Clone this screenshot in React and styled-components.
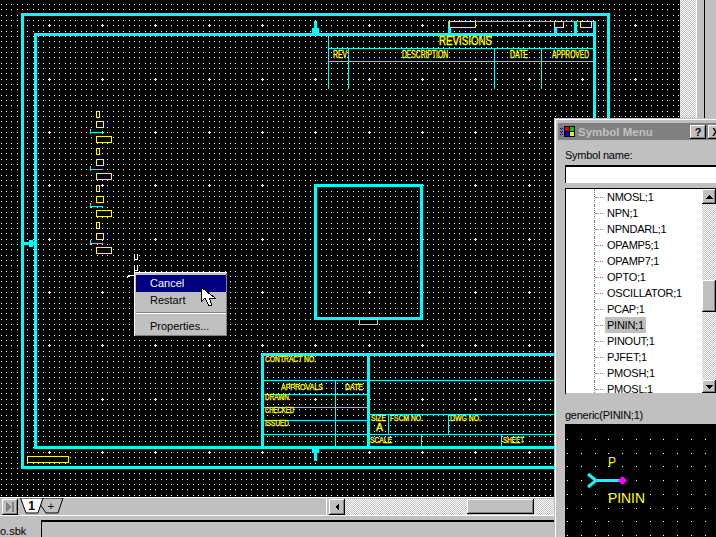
import React from 'react';
import styled, { createGlobalStyle } from 'styled-components';

const GlobalStyle = createGlobalStyle`
  html, body {
    margin: 0;
    padding: 0;
    background: #c0c0c0;
  }
`;

const UI_FONT = `"Liberation Sans", Arial, sans-serif`;
const CHECKER = `repeating-conic-gradient(#c0c0c0 0 25%, #ffffff 0 50%) 0 0 / 2px 2px`;
const RAISED = `box-shadow: inset -1px -1px 0 #000, inset 1px 1px 0 #fff, inset -2px -2px 0 #808080;`;

const Screen = styled.div`
  position: relative;
  display: flex;
  flex-direction: column;
  width: 716px;
  height: 537px;
  overflow: hidden;
  background: #c0c0c0;
  font-family: ${UI_FONT};
  color: #000;
`;

const MainRow = styled.div`
  display: flex;
  height: 497px;
`;

const CanvasSvg = styled.svg`
  display: block;
  flex: none;
  background: #000;
  text { font-family: ${UI_FONT}; }
`;

const VTrack = styled.div`
  width: 16px;
  background: ${CHECKER};
`;

const VGap = styled.div`
  width: 8px;
  background: #c0c0c0;
  border-left: 1px solid #fff;
  box-sizing: border-box;
`;

const VEdge = styled.div`
  flex: 1;
  background: #c0c0c0;
  border-left: 1px solid #000;
`;

const TabRow = styled.div`
  display: flex;
  align-items: center;
  box-sizing: border-box;
  height: 19px;
  padding-left: 2px;
  border-top: 1px solid #fff;
  border-bottom: 1px solid #fff;
`;

const NavButton = styled.div`
  display: flex;
  align-items: center;
  justify-content: center;
  width: 16px;
  height: 16px;
  background: #c0c0c0;
  ${RAISED}
`;

const TabStrip = styled.svg`
  display: block;
  margin-left: 2px;
  flex: none;
  text { font-family: ${UI_FONT}; }
`;

const TabFiller = styled.div`
  width: 262px;
  height: 100%;
  border-right: 1px solid #fff;
  margin-right: 2px;
`;

const ArrowButton = styled.div`
  display: flex;
  align-items: center;
  justify-content: center;
  flex: none;
  width: ${p => p.$w || 16}px;
  height: ${p => p.$h || 16}px;
  background: #c0c0c0;
  ${RAISED}
`;

const HTrack = styled.div`
  width: ${p => p.$w}px;
  height: 16px;
  flex: none;
  background: ${CHECKER};
`;

const Thumb = styled.div`
  flex: none;
  width: ${p => (p.$w ? `${p.$w}px` : 'auto')};
  height: ${p => p.$h}px;
  background: #c0c0c0;
  ${RAISED}
`;

const StatusBar = styled.div`
  display: flex;
  flex: 1;
  padding-top: 4px;
`;

const StatusName = styled.div`
  width: 41px;
  flex: none;
  font-size: 11px;
  line-height: 13px;
  padding-top: 5px;
  overflow: hidden;
`;

const StatusField = styled.div`
  flex: 1;
  border-top: 2px solid #000;
  border-left: 1px solid #000;
`;

const ContextMenu = styled.div`
  position: absolute;
  left: 134px;
  top: 272px;
  box-sizing: border-box;
  width: 94px;
  height: 65px;
  padding: 3px 2px;
  background: #c0c0c0;
  ${RAISED}
  font-size: 11px;
`;

const MenuItem = styled.div`
  height: 17px;
  line-height: 17px;
  padding-left: 14px;
  color: ${p => (p.$active ? '#fff' : '#000')};
  background: ${p => (p.$active ? '#000080' : 'transparent')};
`;

const MenuSeparator = styled.div`
  height: 0;
  margin: 3px 0 4px;
  border-top: 1px solid #808080;
  border-bottom: 1px solid #fff;
`;

const Pointer = styled.svg`
  position: absolute;
  left: 200px;
  top: 286px;
`;

const SymbolWindow = styled.div`
  position: absolute;
  left: 554px;
  top: 118px;
  width: 200px;
  height: 440px;
  background: #c0c0c0;
  border-left: 1px solid #c0c0c0;
  border-top: 1px solid #c0c0c0;
  box-shadow: inset 1px 1px 0 #fff;
`;

const TitleBar = styled.div`
  display: flex;
  align-items: center;
  height: 17px;
  margin: 4px 0 0 3px;
  background: #808080;
  padding-left: 2px;
`;

const TitleText = styled.div`
  margin-left: 2px;
  width: 112px;
  font-size: 11.5px;
  font-weight: bold;
  color: #c0c0c0;
`;

const TitleButton = styled.div`
  flex: none;
  width: 16px;
  height: 14px;
  margin-right: 2px;
  font-size: 11px;
  font-weight: bold;
  line-height: 14px;
  text-align: center;
  background: #c0c0c0;
  ${RAISED}
`;

const WindowBody = styled.div`
  display: flex;
  flex-direction: column;
  padding: 8px 0 0 10px;
`;

const FieldLabel = styled.div`
  height: 14px;
  font-size: 11px;
  letter-spacing: -0.25px;
  line-height: 14px;
`;

const NameInput = styled.div`
  width: 151px;
  height: 18px;
  margin-top: 3px;
  box-sizing: border-box;
  background: #fff;
  border-top: 2px solid #000;
  border-left: 1px solid #000;
`;

const ListBox = styled.div`
  display: flex;
  width: 151px;
  height: 207px;
  margin: 5px 0 13px;
  box-sizing: border-box;
  overflow: hidden;
  background: #fff;
  border-top: 1px solid #000;
  border-left: 1px solid #000;
  border-bottom: 2px solid #c0c0c0;
`;

const ListRows = styled.div`
  flex: 1;
  overflow: hidden;
`;

const TreeRow = styled.div`
  display: flex;
  align-items: center;
  height: 16px;
  padding-left: 28px;
  font-size: 11px;
  letter-spacing: -0.25px;
`;

const TreeGuide = styled.div`
  align-self: stretch;
  width: 9px;
  flex: none;
  margin-right: 1px;
  border-left: 1px dotted #808080;
  display: flex;
  align-items: center;
`;

const TreeDash = styled.div`
  width: 8px;
  border-top: 1px dotted #808080;
`;

const TreeLabel = styled.div`
  height: 16px;
  line-height: 16px;
  padding: 0 2px;
  background: ${p => (p.$selected ? '#c0c0c0' : 'transparent')};
`;

const ListScroll = styled.div`
  display: flex;
  flex-direction: column;
  width: 14px;
  flex: none;
`;

const ScrollSpace = styled.div`
  flex: ${p => (p.$h ? 'none' : 1)};
  height: ${p => (p.$h ? `${p.$h}px` : 'auto')};
  background: ${CHECKER};
`;

const PreviewSvg = styled.svg`
  display: block;
  margin-top: 2px;
  background: #000;
  text { font-family: ${UI_FONT}; }
`;

const CYAN = '#00ffff';
const YELLOW = '#ffff00';

// thick frame lines as x, y, w, h
const THICK = [
  [21, 13, 3, 456], [21, 13, 589, 3], [607, 13, 3, 456], [21, 466, 589, 3],
  [34, 33, 3, 416], [34, 33, 562, 3], [593, 21, 3, 428], [34, 446, 562, 3],
  [314, 184, 3, 135], [314, 184, 109, 3], [420, 184, 3, 135], [314, 317, 109, 3],
  [261, 353, 3, 96], [261, 353, 300, 3], [367, 353, 3, 96],
  [448, 21, 3, 13], [554, 21, 3, 13], [574, 21, 3, 13],
  [314, 21, 3, 10], [312, 28, 7, 5],
  [24, 242, 10, 3], [29, 240, 4, 7],
  [312, 449, 7, 4], [314, 449, 3, 12],
];

const THIN = [
  [448, 21, 146, 1], [328, 48, 266, 1], [328, 61, 266, 1],
  [328, 36, 1, 53], [348, 48, 1, 41], [494, 48, 1, 41], [541, 48, 1, 41],
  [264, 380, 291, 1], [264, 394, 103, 1], [264, 407, 103, 1], [264, 420, 103, 1],
  [370, 414, 185, 1], [264, 434, 291, 1],
  [335, 380, 1, 66], [388, 414, 1, 20], [448, 414, 1, 20], [421, 434, 1, 12], [501, 434, 1, 12],
];

const YELLOW_BOXES = [
  [449, 21, 26, 6], [554, 21, 9, 6], [580, 21, 11, 6], [27, 456, 41, 6],
  [96, 111, 3, 6], [96, 121, 7, 6], [96, 136, 15, 6],
  [96, 148, 3, 6], [96, 159, 7, 6], [96, 173, 15, 6],
  [96, 185, 3, 6], [96, 196, 7, 6], [96, 210, 15, 6],
  [96, 222, 3, 6], [96, 233, 7, 6], [96, 247, 15, 6],
];

// label, left, baseline, width, size
const LABELS = [
  ['REVISIONS', 439, 45, 53, 12],
  ['REV', 333, 58, 14, 10.5], ['DESCRIPTION', 402, 58, 46, 10.5], ['DATE', 510, 58, 18, 10.5], ['APPROVED', 552, 58, 37, 10.5],
  ['CONTRACT NO.', 265, 362, 51, 9], ['APPROVALS', 281, 390, 42, 9], ['DATE', 345, 390, 18, 9],
  ['DRAWN', 265, 400, 24, 8.5], ['CHECKED', 265, 413, 29, 8.5], ['ISSUED', 265, 426, 24, 8.5],
  ['SIZE', 371, 421, 15, 9], ['A', 376, 431, 7, 10], ['FSCM NO.', 390, 421, 33, 9], ['DWG NO.', 450, 421, 31, 9],
  ['SCALE', 370, 443, 22, 9], ['SHEET', 503, 443, 21, 9],
];

const PIN_ROWS = [132, 169, 206, 243];

const SYMBOLS = [
  'NMOSL;1', 'NPN;1', 'NPNDARL;1', 'OPAMP5;1', 'OPAMP7;1', 'OPTO;1', 'OSCILLATOR;1',
  'PCAP;1', 'PININ;1', 'PINOUT;1', 'PJFET;1', 'PMOSH;1', 'PMOSL;1',
];

const gridPath = () => {
  let d = '';
  for (let j = 0; j < 93; j++) {
    const y = Math.round(4 + (j * 16) / 3);
    for (let i = 0; i < 128; i++) {
      const x = Math.floor(1 + (i * 16) / 3);
      d += `M${x} ${y}h1v1h-1z`;
      // every tenth point is a larger cross
      if (i % 10 === 9 && j % 10 === 4) {
        d += `M${x - 1} ${y}h3v1h-3zM${x} ${y - 1}h1v3h-1z`;
      }
    }
  }
  return d;
};

const previewDots = () => {
  let d = '';
  for (let j = 0; j < 9; j++) {
    for (let i = 0; i < 11; i++) {
      const x = Math.round(2 + i * 13.75);
      const y = Math.round(15 + j * 13.7);
      d += `M${x} ${y}h1v1h-1z`;
    }
  }
  return d;
};

const Blocks = ({ items, fill }) =>
  items.map(([x, y, w, h]) => <rect key={`${x}-${y}-${w}-${h}`} x={x} y={y} width={w} height={h} fill={fill} />);

// outlined part box: black inside so the grid does not show through
const PartBox = ({ x, y, w, h }) => (
  <>
    <rect x={x} y={y} width={w + 1} height={h + 1} fill="#000" />
    <path
      d={`M${x} ${y}h${w + 1}v${h + 1}h-${w + 1}zM${x + 1} ${y + 1}v${h - 1}h${w - 1}v-${h - 1}z`}
      fill={YELLOW}
      fillRule="evenodd"
    />
  </>
);

const Schematic = () => (
  <CanvasSvg width={680} height={497} viewBox="0 0 680 497">
    <g shapeRendering="crispEdges">
      <path d={gridPath()} fill="#fff" />
      <Blocks items={THICK} fill={CYAN} />
      <Blocks items={THIN} fill={CYAN} />
      {YELLOW_BOXES.map(([x, y, w, h]) => (
        <PartBox key={`${x}-${y}`} x={x} y={y} w={w} h={h} />
      ))}
      {PIN_ROWS.map(y => (
        <g key={y} fill="none" stroke={CYAN}>
          <path d={`M90 ${y - 3}l1 3l-1 2M91 ${y}h12`} />
        </g>
      ))}
      <rect x={359.5} y={319.5} width={18} height={5} fill="none" stroke="#c0c0c0" />
      <path d="M134 254v5h3v-5M134 265v5h3v-5M127 278l2-3h6" fill="none" stroke="#fff" />
    </g>
    {LABELS.map(([label, x, y, w, size]) => (
      <text
        key={`${label}-${x}`}
        x={x}
        y={y}
        fontSize={size}
        fill={YELLOW}
        stroke={YELLOW}
        strokeWidth={0.35}
        textLength={w}
        lengthAdjust="spacingAndGlyphs"
      >
        {label}
      </text>
    ))}
  </CanvasSvg>
);

const Arrow = ({ dir }) => {
  const points = {
    left: '5,0 5,8 1,4',
    up: '0,5 8,5 4,1',
    down: '0,1 8,1 4,5',
  };
  const size = dir === 'left' ? [6, 8] : [8, 6];
  return (
    <svg width={size[0]} height={size[1]} shapeRendering="crispEdges">
      <polygon points={points[dir]} fill="#000" />
    </svg>
  );
};

const WindowIcon = () => (
  <svg width={16} height={11} shapeRendering="crispEdges">
    <path d="M0 2h1v1H0zM2 2h1v1H2zM0 5h1v1H0zM2 5h1v1H2zM0 8h1v1H0zM2 8h1v1H2zM1 3h1v1H1zM1 6h1v1H1z" fill="#0000c0" />
    <rect x={4} y={0} width={11} height={11} fill="#000" />
    <rect x={5} y={1} width={4} height={4} fill="#e00000" />
    <rect x={10} y={1} width={4} height={4} fill="#00d000" />
    <rect x={5} y={6} width={4} height={4} fill="#0000e0" />
    <rect x={10} y={6} width={4} height={4} fill="#f0f000" />
  </svg>
);

const App = () => (
  <Screen>
    <GlobalStyle />
    <MainRow>
      <Schematic />
      <VTrack />
      <VGap />
      <VEdge />
    </MainRow>

    <TabRow>
      <NavButton>
        <svg width={8} height={10} shapeRendering="crispEdges">
          <polygon points="0,0 5,5 0,10" fill="#808080" />
          <rect x={6} y={0} width={2} height={10} fill="#808080" />
        </svg>
      </NavButton>
      <TabStrip width={44} height={17} viewBox="0 0 44 17">
        <polygon points="23,0 43,0 38,15 26,15 20,6" fill="#c0c0c0" stroke="#000" />
        <polygon points="0.5,0 23,0 18,15 6,15" fill="#fff" stroke="#000" />
        <text x={11.5} y={12} fontSize={12} fontWeight="bold" textAnchor="middle" fill="#000">1</text>
        <text x={31} y={12} fontSize={11} textAnchor="middle" fill="#000">+</text>
      </TabStrip>
      <TabFiller />
      <ArrowButton>
        <Arrow dir="left" />
      </ArrowButton>
      <HTrack $w={122} />
      <Thumb $w={67} $h={15} />
      <HTrack $w={30} />
    </TabRow>

    <StatusBar>
      <StatusName>o.sbk</StatusName>
      <StatusField />
    </StatusBar>

    <ContextMenu>
      <MenuItem $active>Cancel</MenuItem>
      <MenuItem>Restart</MenuItem>
      <MenuSeparator />
      <MenuItem>Properties...</MenuItem>
    </ContextMenu>

    <Pointer width={18} height={22} viewBox="0 0 18 22" shapeRendering="crispEdges">
      <polygon points="1,1 1,16 5,12 9,20 12,19 9,12 15,12" fill="#fff" stroke="#000" />
    </Pointer>

    <SymbolWindow>
      <TitleBar>
        <WindowIcon />
        <TitleText>Symbol Menu</TitleText>
        <TitleButton>?</TitleButton>
        <TitleButton>X</TitleButton>
      </TitleBar>
      <WindowBody>
        <FieldLabel>Symbol name:</FieldLabel>
        <NameInput />
        <ListBox>
          <ListRows>
            {SYMBOLS.map(name => (
              <TreeRow key={name}>
                <TreeGuide>
                  <TreeDash />
                </TreeGuide>
                <TreeLabel $selected={name === 'PININ;1'}>{name}</TreeLabel>
              </TreeRow>
            ))}
          </ListRows>
          <ListScroll>
            <ArrowButton $w={14} $h={15}>
              <Arrow dir="up" />
            </ArrowButton>
            <ScrollSpace $h={76} />
            <Thumb $h={32} />
            <ScrollSpace />
            <ArrowButton $w={14} $h={13}>
              <Arrow dir="down" />
            </ArrowButton>
          </ListScroll>
        </ListBox>
        <FieldLabel>generic(PININ;1)</FieldLabel>
        <PreviewSvg width={151} height={113} viewBox="0 0 151 113">
          <path d={previewDots()} fill="#fff" shapeRendering="crispEdges" />
          <path d="M23 50l8 6.5l-8 6.5M31 56.5h24" fill="none" stroke={CYAN} strokeWidth={3} />
          <polygon points="57.5,52 62,56.5 57.5,61 53,56.5" fill="#ff00ff" />
          <text x={43} y={43} fontSize={15} fill={YELLOW} textLength={8} lengthAdjust="spacingAndGlyphs">P</text>
          <text x={43} y={79} fontSize={15} fill={YELLOW} textLength={37} lengthAdjust="spacingAndGlyphs">PININ</text>
        </PreviewSvg>
      </WindowBody>
    </SymbolWindow>
  </Screen>
);

export default App;
